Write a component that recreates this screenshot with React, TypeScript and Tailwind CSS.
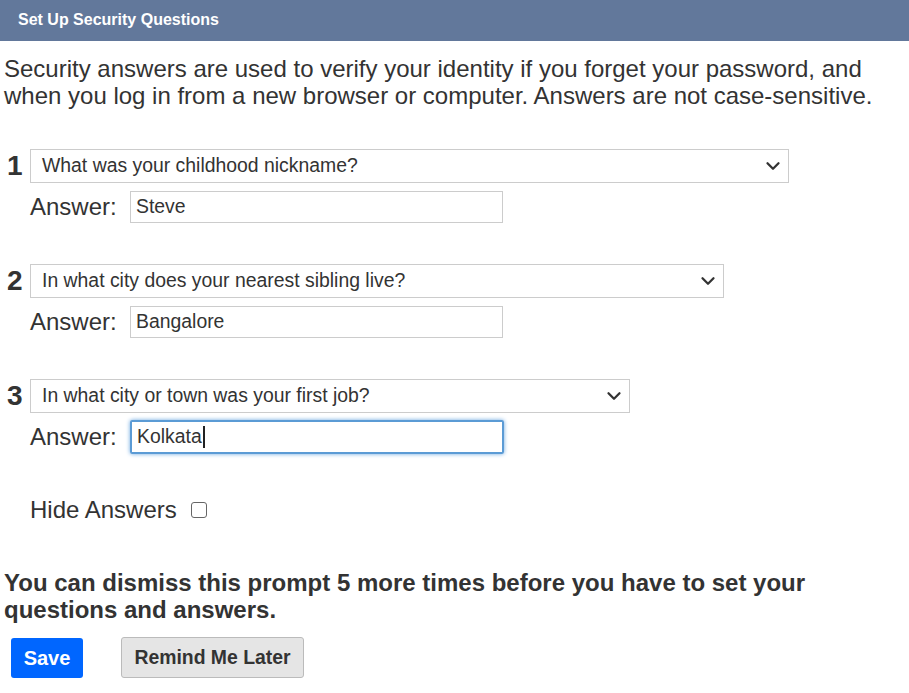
import { ChevronDown } from "lucide-react";

const questions = [
  { n: 1, q: "What was your childhood nickname?", a: "Steve", w: "w-[759px]" },
  { n: 2, q: "In what city does your nearest sibling live?", a: "Bangalore", w: "w-[694px]" },
  { n: 3, q: "In what city or town was your first job?", a: "Kolkata", w: "w-[600px]" },
];

export default function App() {
  return (
    <div className="min-h-[693px] w-[909px] bg-white text-[#333] font-['Liberation_Sans',Arial,sans-serif]">
      {/* HEADER */}
      <div className="h-[41px] bg-[#62789b] px-[18px] pt-[8px] text-[16px] font-bold text-white">
        Set Up Security Questions
      </div>

      <p className="mt-[14px] pl-[4px] pr-[20px] text-[24px] leading-[27px]">
        Security answers are used to verify your identity if you forget your password, and when you log in from a new browser or computer. Answers are not case-sensitive.
      </p>

      <div className="mt-[40px] flex flex-col gap-[41px]">
        {questions.map((item, i) => (
          <div key={item.n}>
            <div className="flex items-center">
              <span className="w-[30px] pl-[7px] text-[28px] font-bold leading-none">
                {item.n}
              </span>
              <div
                className={`${item.w} flex h-[34px] items-center justify-between border border-[#ccc] bg-white pl-[11px] pr-[4px] text-[19.4px]`}
              >
                <span>{item.q}</span>
                <ChevronDown className="h-[22px] w-[22px] text-[#333]" strokeWidth={2.5} />
              </div>
            </div>
            <div className="mt-[8px] flex h-[32px] items-center pl-[30px]">
              <span className="w-[100px] text-[24px]">Answer:</span>
              {i === 2 ? (
                <div className="-my-[1px] flex h-[34px] w-[374px] items-center rounded-[2px] border-2 border-[#5b9bd5] pl-[5px] text-[19.4px] shadow-[0_0_4px_#6aa6e0]">
                  Kolkata
                  <span className="ml-[1px] h-[22px] w-[2px] bg-[#222]" />
                </div>
              ) : (
                <div className="flex h-[32px] w-[373px] items-center border border-[#ccc] pl-[5px] text-[19.4px]">
                  {item.a}
                </div>
              )}
            </div>
          </div>
        ))}
      </div>

      <div className="mt-[39px] flex items-center pl-[30px] text-[24px]">
        Hide Answers
        <span className="ml-[14px] h-[16px] w-[16px] rounded-[3px] border border-[#666]" />
      </div>

      <p className="mt-[41px] pl-[4px] pr-[60px] text-[24px] font-bold leading-[27px]">
        You can dismiss this prompt 5 more times before you have to set your questions and answers.
      </p>

      <div className="mt-[14px] flex items-center gap-[38px] pl-[11px]">
        <button className="h-[40px] w-[72px] rounded-[3px] bg-[#0066ff] text-[20px] font-bold text-white">
          Save
        </button>
        <button className="h-[41px] w-[183px] rounded-[3px] border border-[#bbb] bg-[#e5e5e5] text-[19.4px] font-bold text-[#333]">
          Remind Me Later
        </button>
      </div>
    </div>
  );
}
